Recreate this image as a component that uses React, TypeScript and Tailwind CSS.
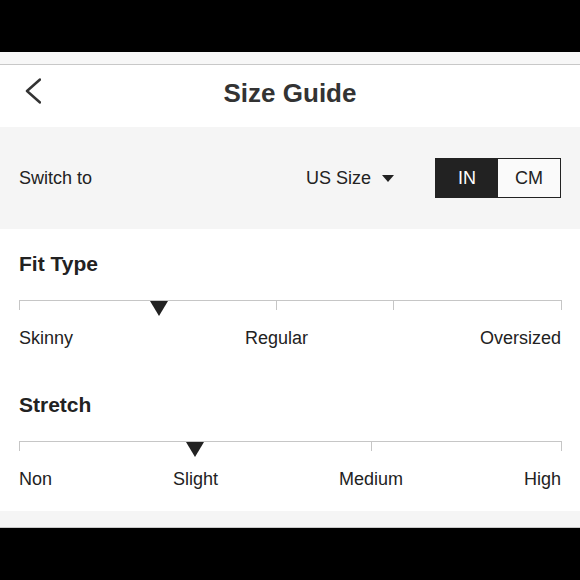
import React from "react";

type Scale = {
  title: string;
  labels: string[];
  ticks: number[]; // x positions relative to track start (px)
  marker: number; // center x relative to track start
};

const scales: Scale[] = [
  {
    title: "Fit Type",
    labels: ["Skinny", "Regular", "Oversized"],
    ticks: [0, 257, 374, 542],
    marker: 139.5,
  },
  {
    title: "Stretch",
    labels: ["Non", "Slight", "Medium", "High"],
    ticks: [0, 352, 542],
    marker: 175.5,
  },
];

function ScaleBlock({ s, first }: { s: Scale; first: boolean }) {
  return (
    <div className={first ? "" : "mt-[44px]"}>
      <div className="text-[21px] leading-[24px] font-bold text-[#222]">{s.title}</div>
      <div className="relative mt-[24px] h-[10px] w-[543px]">
        <div className="absolute left-0 right-0 top-0 h-px bg-[#c6c6c6]" />
        {s.ticks.map((t) => (
          <div
            key={t}
            className="absolute top-0 h-[10px] w-px bg-[#c6c6c6]"
            style={{ left: t }}
          />
        ))}
        <div
          className="absolute top-[1px] h-0 w-0 border-l-[9px] border-r-[9px] border-t-[15px] border-l-transparent border-r-transparent border-t-[#222]"
          style={{ left: s.marker - 9 }}
        />
      </div>
      <div className="mt-[17px] flex justify-between text-[18px] leading-[22px] text-[#222]">
        {s.labels.map((l) => (
          <span key={l}>{l}</span>
        ))}
      </div>
    </div>
  );
}

export default function App() {
  return (
    <div
      className="flex h-[580px] w-[580px] flex-col bg-black"
      style={{ fontFamily: '"Liberation Sans", Arial, sans-serif' }}
    >
      <div className="h-[52px] shrink-0 bg-black" />
      <div className="h-[13px] shrink-0 border-b border-[#c8c8c8] bg-[#f7f7f7]" />
      <header className="grid h-[62px] shrink-0 grid-cols-[1fr_auto_1fr] items-start bg-white">
        <div className="pl-[25px] pt-[13px]">
          <svg width="16" height="26" viewBox="0 0 16 26" fill="none">
            <polyline
              points="15,1.5 2,13 15,24.5"
              stroke="#333"
              strokeWidth="2.5"
              strokeLinecap="round"
              strokeLinejoin="round"
            />
          </svg>
        </div>
        <h1 className="pt-[13px] text-[26px] leading-[30px] font-bold text-[#333]">Size Guide</h1>
        <div />
      </header>
      <section className="flex h-[102px] shrink-0 items-center bg-[#f5f5f5] px-[19px] text-[18px] text-[#222]">
        <span className="leading-[22px]">Switch to</span>
        <div className="flex-1" />
        <div className="mr-[41px] flex items-center">
          <span className="leading-[22px]">US Size</span>
          <span className="ml-[11px] h-0 w-0 border-l-[6px] border-r-[6px] border-t-[7px] border-l-transparent border-r-transparent border-t-[#222]" />
        </div>
        <div className="flex h-[40px] w-[126px] border-[1.5px] border-[#222]">
          <div className="flex w-[62px] items-center justify-center bg-[#222] text-white">IN</div>
          <div className="flex flex-1 items-center justify-center bg-[#fafafa] text-[#222]">CM</div>
        </div>
      </section>
      <section className="h-[282px] shrink-0 bg-white px-[19px] pt-[23px]">
        {scales.map((s, i) => (
          <ScaleBlock key={s.title} s={s} first={i === 0} />
        ))}
      </section>
      <div className="h-[17px] shrink-0 border-b border-[#c8c8c8] bg-[#f5f5f5]" />
      <div className="flex-1 bg-black" />
    </div>
  );
}
